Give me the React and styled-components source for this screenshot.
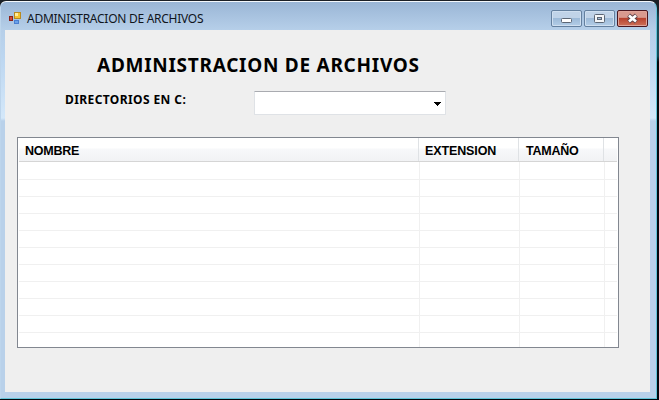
import React from "react";
import styled, { createGlobalStyle, css } from "styled-components";

const GlobalStyle = createGlobalStyle`
  *, *::before, *::after { box-sizing: border-box; }
  body { margin: 0; overflow: hidden; background: #071018; }
`;

const Desktop = styled.div`
  width: 659px;
  height: 400px;
  padding: 1px 2px 1px 0;
  background: linear-gradient(#1b2026 0 8px, #164b59 18px 56px, #04080d 62px);
`;

const Window = styled.main`
  display: flex;
  flex-direction: column;
  width: 657px;
  height: 398px;
  padding: 0 6px 5px 4px;
  border: 1px solid #62c4d8;
  border-top-color: #f4f8fc;
  border-left-color: #bdd5ec;
  border-radius: 6px 7px 0 0;
  background: linear-gradient(#9ab6d6 0, #b6cfe9 28px, #bcd6f0 55px, #d4e8fa 116px, #b9d1ea 119px);
`;

const TitleBar = styled.header`
  display: flex;
  flex: none;
  height: 28px;
  padding: 0 2px 0 4px;
`;

const AppIcon = styled.svg`
  flex: none;
  width: 14px;
  height: 14px;
  margin-top: 10px;
`;

const Caption = styled.h1`
  flex: 1;
  margin: 8px 0 0 4px;
  font: 400 12px/18px "Noto Sans", sans-serif;
  letter-spacing: -0.27px;
  white-space: nowrap;
  color: #10151c;
`;

const Controls = styled.div`
  display: flex;
  gap: 2px;
  margin-top: 8px;
`;

const ControlButton = styled.button`
  display: grid;
  place-items: center;
  width: 31px;
  height: 17px;
  padding: 0;
  border: 1px solid #64809f;
  border-radius: 2px;
  background: linear-gradient(#c0d3e8 0 45%, #9dbad8 50%, #b3cde7);
  box-shadow: inset 0 0 0 1px #cfdff0;
  ${({ $danger }) => $danger && css`
    border-color: #4a1720;
    background: linear-gradient(#d99a8f 0 42%, #b8432f 50%, #cd7159);
    box-shadow: inset 0 0 0 1px #dfa49a;
  `}
  svg { display: block; }
`;

const Client = styled.section`
  flex: none;
  width: 645px;
  height: 362px;
  padding: 23px 0 0 12px;
  background: #efefef;
`;

const Heading = styled.h2`
  margin: 0 0 0 80px;
  font: 700 19px/24px "Noto Sans", sans-serif;
  letter-spacing: 0.73px;
  white-space: nowrap;
  color: #000;
`;

const DirectoryRow = styled.div`
  display: flex;
  margin: 14px 0 0 48px;
`;

const Label = styled.label`
  width: 189px;
  font: 700 12px/17px "Noto Sans", sans-serif;
  letter-spacing: 0.4px;
  white-space: nowrap;
  color: #000;
`;

const Combo = styled.button`
  display: flex;
  align-items: center;
  justify-content: flex-end;
  width: 192px;
  height: 24px;
  padding: 1px 4px 0 0;
  border: 1px solid #dfe2e6;
  border-top-color: #a9abb0;
  border-radius: 1px;
  background: #fff;
`;

const List = styled.div`
  width: 602px;
  height: 211px;
  margin-top: 22px;
  padding-left: 1px;
  border: 1px solid #828790;
  overflow: hidden;
  background: #fff;
`;

const HeaderRow = styled.div`
  display: grid;
  grid-template-columns: 400px 100px 85px 1fr;
  width: 598px;
  height: 24px;
  border-bottom: 1px solid #d5d5d5;
  background: linear-gradient(#fff 0 10px, #f7f8fa 11px, #f1f2f4);
`;

const HeaderCell = styled.div`
  padding: 5px 0 0 6px;
  border-right: 1px solid #dfe2e5;
  font: 700 12.5px/17px "Liberation Sans", sans-serif;
  letter-spacing: -0.25px;
  white-space: nowrap;
  color: #000;
  &:nth-child(2) { letter-spacing: -0.12px; }
  &:nth-child(3) { padding-left: 7px; }
  &:last-child { border-right: 0; }
`;

const Row = styled.div`
  display: grid;
  grid-template-columns: 401px 100px 85px 1fr;
  width: 598px;
  height: ${({ $first }) => ($first ? 18 : 17)}px;
  border-bottom: 1px solid #f0f0f0;
`;

const Cell = styled.div`
  border-right: 1px solid #f0f0f0;
  &:last-child { border-right: 0; }
`;

const titles = ["NOMBRE", "EXTENSION", "TAMAÑO", ""];

export default function App() {
  return (
    <>
      <GlobalStyle />
      <Desktop>
        <Window>
          <TitleBar>
            <AppIcon viewBox="0 0 14 14">
              <rect x=".5" y="4.5" width="3" height="4" fill="#d04a38" stroke="#8c2119" />
              <rect x="5.5" y=".5" width="6" height="6" fill="#f3c432" stroke="#b98a20" />
              <rect x="6" y="1" width="3" height="3" fill="#ffec9a" />
              <rect x="5.5" y="8.5" width="4" height="3" fill="#6ba2ea" stroke="#4b7fd0" />
            </AppIcon>
            <Caption>ADMINISTRACION DE ARCHIVOS</Caption>
            <Controls>
              <ControlButton aria-label="Minimizar">
                <svg width="13" height="13" viewBox="0 0 13 13">
                  <rect x="1.5" y="6.5" width="10" height="4" rx="1" fill="#fff" stroke="#5c6674" />
                </svg>
              </ControlButton>
              <ControlButton aria-label="Maximizar">
                <svg width="13" height="13" viewBox="0 0 13 13">
                  <rect x="1.5" y="2.5" width="10" height="8" rx="1" fill="#f4f6f8" stroke="#5c6674" />
                  <rect x="4.5" y="5.5" width="4" height="2" fill="#a7bfd9" stroke="#5c6674" />
                </svg>
              </ControlButton>
              <ControlButton $danger aria-label="Cerrar">
                <svg width="13" height="13" viewBox="0 0 13 13">
                  <path d="M2.6 3.3l7.8 6.4M10.4 3.3l-7.8 6.4" stroke="#5d4249" strokeWidth="4.6" />
                  <path d="M3 3.5l7 6M10 3.5l-7 6" stroke="#fff" strokeWidth="2.7" />
                </svg>
              </ControlButton>
            </Controls>
          </TitleBar>
          <Client>
            <Heading>ADMINISTRACION DE ARCHIVOS</Heading>
            <DirectoryRow>
              <Label>DIRECTORIOS EN C:</Label>
              <Combo aria-label="Directorios">
                <svg width="7" height="4" viewBox="0 0 7 4">
                  <path d="M0 0h7v1H6v1H5v1H4v1H3V3H2V2H1V1H0z" fill="#000" />
                </svg>
              </Combo>
            </DirectoryRow>
            <List>
              <HeaderRow>
                {titles.map((t) => <HeaderCell key={t}>{t}</HeaderCell>)}
              </HeaderRow>
              {Array.from({ length: 11 }, (_, i) => (
                <Row key={i} $first={i === 0}>
                  {titles.map((t) => <Cell key={t} />)}
                </Row>
              ))}
            </List>
          </Client>
        </Window>
      </Desktop>
    </>
  );
}
